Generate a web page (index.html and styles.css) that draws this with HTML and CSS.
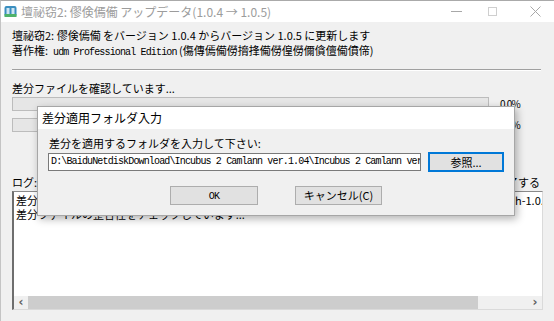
FILE: index.html
```html
<!DOCTYPE html>
<html lang="ja">
<head>
<meta charset="UTF-8" />
<title>アップデータ</title>
<link rel="stylesheet" href="styles.css">
</head>
<body>

<div class="window">
  <div class="titlebar">
    <svg class="app-icon" width="13" height="13" viewBox="0 0 13 13">
      <rect x="0.5" y="1" width="12" height="11" rx="2" fill="#3b8fc0"/>
      <rect x="2.5" y="3" width="3" height="6" fill="#cfe6f3"/>
      <rect x="7.5" y="3" width="3" height="6" fill="#cfe6f3"/>
      <rect x="0.5" y="9" width="12" height="3" fill="#4fb36a"/>
    </svg>
    <span class="title">壇祕窃2: 僇倹傿僃 アップデータ(1.0.4 → 1.0.5)</span>
    <div class="controls">
      <span class="ctl ctl-min"><svg width="11" height="1"><rect width="11" height="1" fill="#a8a8a8"/></svg></span>
      <span class="ctl ctl-max"><svg width="9" height="9"><rect x="0.5" y="0.5" width="8" height="8" fill="none" stroke="#cfcfcf"/></svg></span>
      <span class="ctl ctl-close"><svg width="11" height="11"><path d="M0.5 0.5 L10.5 10.5 M10.5 0.5 L0.5 10.5" stroke="#a8a8a8" stroke-width="1"/></svg></span>
    </div>
  </div>

  <div class="content">
    <p class="line">壇祕窃2: 僇倹傿僃 をバージョン 1.0.4 からバージョン 1.0.5 に更新します</p>
    <p class="line">著作権:&nbsp;&nbsp;<span class="mono">udm Professional Edition</span> (傷傳傿僃僗搚捀僃僗偟僗儞僋儃僃僨偙)</p>
    <hr class="sep">
    <p class="line status">差分ファイルを確認しています...</p>
    <div class="progress-row">
      <div class="progress"></div>
      <span class="pct">0.0%</span>
    </div>
    <div class="progress-row second">
      <div class="progress"></div>
      <span class="pct">0.0%</span>
    </div>
    <div class="log-head">
      <span>ログ:</span>
      <span>完了後に自動的に終了する</span>
    </div>
    <div class="log">
      <div class="log-lines">
        <div class="log-line">差分ファイルパス: D:\BaiduNetdiskDownload\Incubus 2 Camlann ver1.04\Incubus 2 Camlann patch-1.0.5.dat</div>
        <div class="log-line">差分ファイルの整合性をチェックしています...</div>
      </div>
      <div class="hscroll">
        <span class="arrow">&#8249;</span>
        <div class="track"><div class="thumb"></div></div>
        <span class="arrow">&#8250;</span>
      </div>
    </div>
  </div>

  <div class="dialog">
    <div class="dialog-title">差分適用フォルダ入力</div>
    <div class="dialog-body">
      <p class="line">差分を適用するフォルダを入力して下さい:</p>
      <div class="path-row">
        <div class="path-input mono">D:\BaiduNetdiskDownload\Incubus 2 Camlann ver.1.04\Incubus 2 Camlann ver.1.05</div>
        <button class="btn btn-default">参照...</button>
      </div>
      <div class="dialog-buttons">
        <button class="btn btn-ok"><span class="mono">OK</span></button>
        <button class="btn btn-cancel">キャンセル(C)</button>
      </div>
    </div>
  </div>
</div>

</body>
</html>
```

FILE: styles.css
```css
body {
  margin: 0;
  background: #f0f0f0;
  font-family: "Noto Sans CJK JP", sans-serif;
  font-size: 11px;
  color: #000;
}

.window {
  position: relative;
  width: 554px;
  height: 321px;
  overflow: hidden;
  box-sizing: border-box;
  border-top: 1px solid #aaa;
  border-left: 1px solid #c4c4c4;
}

.titlebar {
  height: 21px;
  background: #fff;
  display: flex;
  align-items: center;
  padding-left: 3px;
}

.app-icon {
  display: block;
}

.title {
  margin-left: 4px;
  font-size: 12px;
  color: #9c9c9c;
  white-space: nowrap;
}

.controls {
  margin-left: auto;
  display: flex;
  height: 100%;
}

.ctl {
  display: flex;
  align-items: center;
  justify-content: center;
}

.ctl svg {
  display: block;
}

.ctl-min {
  width: 22px;
}

.ctl-max {
  width: 50px;
}

.ctl-close {
  width: 37px;
}

.content {
  padding: 6px 11px 0 11px;
}

.line {
  margin: 0;
  line-height: 15px;
  white-space: nowrap;
}

.mono {
  font-family: "Liberation Mono", monospace;
  font-size: 10px;
  letter-spacing: -0.85px;
}

.sep {
  margin: 9px 2px 0 0;
  height: 0;
  border: none;
  border-top: 1px solid #a0a0a0;
  border-bottom: 1px solid #fff;
}

.status {
  margin-top: 10px;
}

.progress-row {
  display: flex;
  align-items: center;
}

.progress-row.second {
  margin-top: 6px;
}

.progress {
  flex: 1;
  height: 12px;
  background: #e6e6e6;
  border: 1px solid #bcbcbc;
}

.pct {
  width: 54px;
  box-sizing: border-box;
  padding-left: 11px;
  font-size: 10px;
  letter-spacing: -0.8px;
}

.log-head {
  margin-top: 43px;
  display: flex;
  justify-content: space-between;
  line-height: 15px;
  padding-right: 3px;
}

.log {
  margin-top: 1px;
  height: 119px;
  box-sizing: border-box;
  background: #fff;
  border-left: 2px solid #6e6e6e;
  border-top: 1px solid #8a8a8a;
  border-right: 1px solid #dadada;
  border-bottom: 1px solid #dadada;
  display: flex;
  flex-direction: column;
}

.log-lines {
  flex: 1;
  overflow: hidden;
  padding: 1px 0 0 2px;
}

.log-line {
  line-height: 14px;
  white-space: nowrap;
}

.hscroll {
  height: 13px;
  display: flex;
  align-items: center;
  background: #f0f0f0;
}

.arrow {
  width: 14px;
  text-align: center;
  font-family: "DejaVu Sans", sans-serif;
  font-size: 12px;
  font-weight: bold;
  line-height: 13px;
  color: #606060;
}

.track {
  flex: 1;
  height: 100%;
  padding-right: 50px;
}

.thumb {
  height: 100%;
  background: #cdcdcd;
}

.dialog {
  position: absolute;
  left: 36px;
  top: 105px;
  width: 478px;
  height: 110px;
  box-sizing: border-box;
  background: #f0f0f0;
  border: 1px solid #a6a6a6;
  box-shadow: 2px 3px 8px rgba(0,0,0,0.3);
}

.dialog-title {
  height: 22px;
  line-height: 22px;
  background: #fff;
  padding-left: 4px;
  font-size: 12px;
}

.dialog-body {
  padding: 7px 10px 0 10px;
}

.dialog-body .line {
  padding-left: 1px;
}

.path-row {
  margin-top: 1px;
  display: flex;
  align-items: center;
  gap: 7px;
}

.path-input {
  width: 374px;
  height: 18px;
  line-height: 16px;
  box-sizing: border-box;
  background: #fff;
  border: 1px solid #7a7a7a;
  padding: 0 2px;
  overflow: hidden;
  white-space: nowrap;
}

.btn {
  font-family: "Noto Sans CJK JP", sans-serif;
  font-size: 11px;
  color: #000;
  background: #e1e1e1;
  border: 1px solid #adadad;
  padding: 0;
  box-sizing: border-box;
  line-height: 15px;
}

.btn-default {
  width: 76px;
  height: 20px;
  border: 2px solid #0078d7;
}

.dialog-buttons {
  margin-top: 14px;
  display: flex;
  justify-content: center;
  gap: 37px;
}

.btn-ok {
  width: 88px;
  height: 19px;
}

.btn-cancel {
  width: 87px;
  height: 19px;
}
```
